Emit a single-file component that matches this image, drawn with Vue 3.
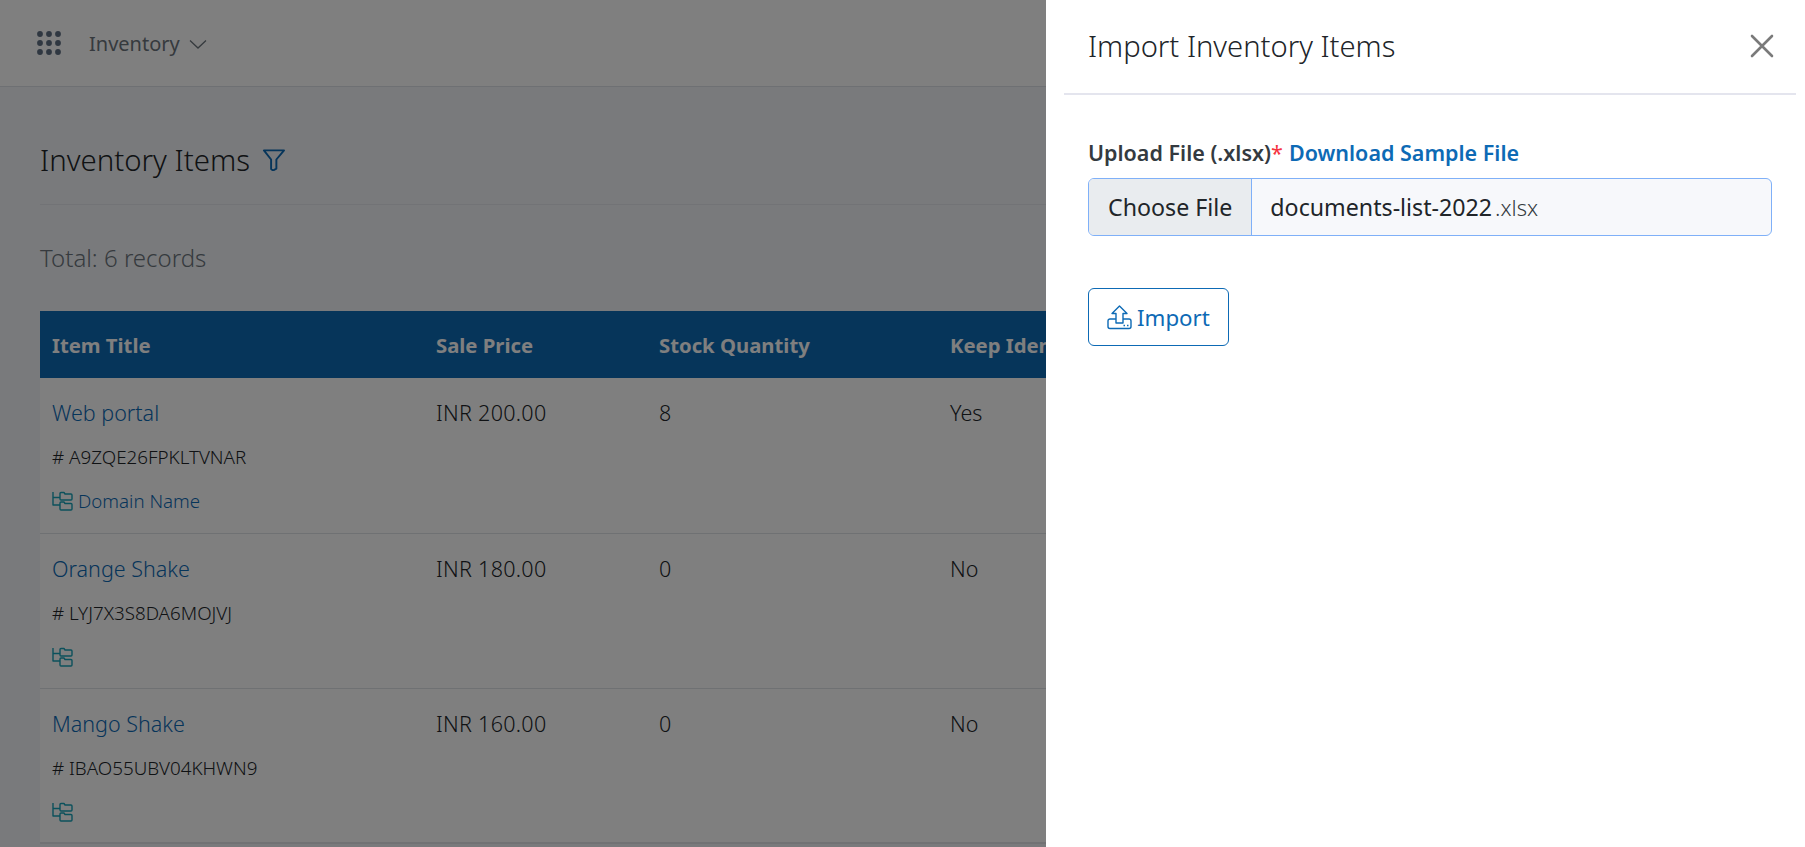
<template>
  <div class="page">
    <header class="topbar">
      <svg class="apps" width="24" height="24" viewBox="0 0 24 24">
        <template v-for="y in dots" :key="y">
          <circle v-for="x in dots" :key="x" :cx="x" :cy="y" r="2.9" fill="#5e6e82" />
        </template>
      </svg>
      <span class="module">Inventory</span>
      <svg class="chevron" width="18" height="18" viewBox="0 0 18 18" fill="none" stroke="#6c757d" stroke-width="1.3">
        <path d="M1 5.500 9 13l8-7.500" />
      </svg>
    </header>

    <main class="content">
      <div class="heading">
        <h1>Inventory Items</h1>
        <svg width="23" height="23" viewBox="0 0 24 24" fill="none" stroke="#0d6ab5" stroke-width="2" stroke-linejoin="round">
          <path d="M2 2.500h21L15 12v9.500l-3.500 2-2-1.500V12z" />
        </svg>
      </div>
      <div class="total">Total: 6 records</div>

      <table class="items">
        <colgroup>
          <col style="width: 384px" />
          <col style="width: 223px" />
          <col style="width: 291px" />
          <col style="width: 300px" />
        </colgroup>
        <thead>
          <tr>
            <th>Item Title</th>
            <th>Sale Price</th>
            <th>Stock Quantity</th>
            <th>Keep Identity</th>
          </tr>
        </thead>
        <tbody>
          <tr v-for="item in items" :key="item.code">
            <td>
              <a class="title">{{ item.title }}</a>
              <div class="code"># {{ item.code }}</div>
              <div class="cat">
                <svg width="21" height="20" viewBox="0 0 21 20" fill="none" stroke="#17a2b8" stroke-width="1.4" stroke-linejoin="round">
                  <path d="M1 1v13h7M1 6.500h7" />
                  <path d="M8 2.500a1 1 0 0 1 1-1h3l1 1.500h6a1 1 0 0 1 1 1V8a1 1 0 0 1-1 1H9a1 1 0 0 1-1-1z" />
                  <path d="M8 12a1 1 0 0 1 1-1h3l1 1.500h6a1 1 0 0 1 1 1V18a1 1 0 0 1-1 1H9a1 1 0 0 1-1-1z" />
                </svg>
                <a v-if="item.category">{{ item.category }}</a>
              </div>
            </td>
            <td class="price">{{ item.price }}</td>
            <td>{{ item.stock }}</td>
            <td>{{ item.keep }}</td>
          </tr>
        </tbody>
      </table>
    </main>

    <div class="backdrop"></div>

    <aside class="panel">
      <div class="panel-head">
        <h2>Import Inventory Items</h2>
        <svg class="close" width="24" height="24" viewBox="0 0 24 24" stroke="#7a7a7a" stroke-width="2.6" stroke-linecap="round">
          <path d="M2 2l20 20M22 2 2 22" />
        </svg>
      </div>
      <div class="panel-body">
        <div class="field-label">
          <span>Upload File (.xlsx)</span><span class="req">*</span>
          <a>Download Sample File</a>
        </div>
        <div class="file-input">
          <span class="choose">Choose File</span>
          <span class="file-name">documents-list-2022<span class="ext">.xlsx</span></span>
        </div>
        <button class="import">
          <svg width="25" height="25" viewBox="0 0 25 25" fill="none" stroke="#0d6ab5" stroke-width="1.4" stroke-linejoin="round">
            <path d="M12.500 1 20 8.500h-4V18H9V8.500H5z" />
            <path d="M9 14H3a2 2 0 0 0-2 2v5.500a2 2 0 0 0 2 2h19a2 2 0 0 0 2-2V16a2 2 0 0 0-2-2h-6" />
            <path d="M16.500 20.500h1.500M20 20.500h1.500" />
          </svg>
          Import
        </button>
      </div>
    </aside>
  </div>
</template>

<script setup>
const dots = [3, 12, 21]

const items = [
  { title: 'Web portal', code: 'A9ZQE26FPKLTVNAR', category: 'Domain Name', price: 'INR 200.00', stock: '8', keep: 'Yes' },
  { title: 'Orange Shake', code: 'LYJ7X3S8DA6MOJVJ', category: '', price: 'INR 180.00', stock: '0', keep: 'No' },
  { title: 'Mango Shake', code: 'IBAO55UBV04KHWN9', category: '', price: 'INR 160.00', stock: '0', keep: 'No' },
]
</script>

<style>
html,
body {
  margin: 0;
  overflow: hidden;
}
</style>

<style scoped>
.page {
  position: relative;
  width: 1805px;
  height: 847px;
  overflow: hidden;
  background: #f3f5f8;
  font-family: "Noto Sans", "Open Sans", sans-serif;
  font-weight: 300;
  color: #212529;
}

.topbar {
  display: flex;
  align-items: center;
  height: 87px;
  box-sizing: border-box;
  padding-left: 37px;
  background: #fff;
  border-bottom: 1px solid #dde1e7;
}

.module {
  margin-left: 28px;
  margin-right: 9px;
  font-size: 20px;
  font-weight: 400;
  color: #6c757d;
}

.chevron {
  margin-top: 2px;
}

.content {
  padding: 0 0 0 40px;
}

.heading {
  display: flex;
  align-items: center;
  gap: 12px;
  height: 118px;
  box-sizing: border-box;
  padding-top: 28px;
  border-bottom: 1px solid #e4e7ec;
}

.heading h1 {
  margin: 0;
  font-size: 29.4px;
  font-weight: 300;
}

.total {
  margin-top: 35px;
  line-height: 36px;
  font-size: 24px;
  color: #6c757d;
}

.items {
  margin-top: 35px;
  width: 1198px;
  table-layout: fixed;
  border-collapse: collapse;
  background: #fff;
  font-size: 21.500px;
}

.items th {
  height: 67px;
  padding: 0 12px;
  background: #0d6ab5;
  color: #fff;
  text-align: left;
  font-size: 20.3px;
  font-weight: 700;
  white-space: nowrap;
}

.items td {
  height: 155px;
  box-sizing: border-box;
  padding: 21px 12px 0;
  vertical-align: top;
  border-bottom: 1px solid #dfe2e6;
  line-height: 28px;
}

.items tr:last-child td {
  border-bottom: 2px solid #e2e4e8;
}

.items .price {
  letter-spacing: 0.3px;
}

.title {
  display: block;
  color: #0d6ab5;
}

.code {
  margin-top: 16px;
  font-size: 18.8px;
}

.cat {
  display: flex;
  align-items: center;
  gap: 5px;
  min-height: 28px;
  margin-top: 16px;
  color: #0d6ab5;
  font-size: 18.7px;
}

.backdrop {
  position: absolute;
  inset: 0;
  background: rgba(0, 0, 0, 0.5);
}

.panel {
  position: absolute;
  top: 0;
  right: 0;
  bottom: 0;
  width: 759px;
  box-sizing: border-box;
  padding: 0 9px 0 18px;
  background: #fff;
}

.panel-head {
  display: flex;
  align-items: center;
  justify-content: space-between;
  height: 95px;
  box-sizing: border-box;
  padding: 0 22px 2px 24px;
  border-bottom: 2px solid #e4e5ee;
}

.panel-head h2 {
  margin: 0;
  font-size: 29.2px;
  font-weight: 300;
}

.panel-body {
  padding: 0 24px;
}

.field-label {
  margin-top: 42px;
  line-height: 32px;
  font-size: 21.5px;
  font-weight: 600;
  color: #343a40;
}

.field-label a {
  color: #0d6ab5;
  margin-left: 6px;
}

.req {
  color: #f5333f;
  font-weight: 400;
}

.file-input {
  display: flex;
  align-items: stretch;
  height: 58px;
  margin-top: 9px;
  box-sizing: border-box;
  background: #f7f8fb;
  border: 1px solid #7fb0f8;
  border-radius: 6px;
  overflow: hidden;
  font-size: 23.2px;
  font-weight: 400;
}

.choose {
  display: flex;
  align-items: center;
  padding: 0 19px;
  background: #e9ecef;
  border-right: 1px solid #7fb0f8;
}

.file-name {
  display: flex;
  align-items: center;
  padding-left: 18px;
}

.ext {
  font-size: 22px;
  font-weight: 300;
  color: #343a40;
  margin-left: 3px;
}

.import {
  display: flex;
  align-items: center;
  gap: 5px;
  margin-top: 52px;
  height: 58px;
  width: 141px;
  padding: 0 0 0 18px;
  box-sizing: border-box;
  background: #fff;
  border: 1px solid #0d6ab5;
  border-radius: 6px;
  color: #0d6ab5;
  font-family: inherit;
  font-size: 22.3px;
  font-weight: 400;
}
</style>
